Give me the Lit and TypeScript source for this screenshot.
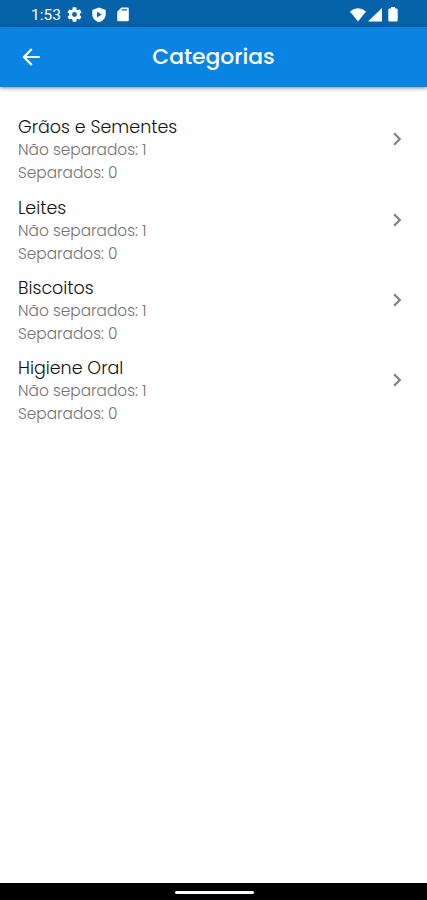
import { LitElement, html, css } from "lit";
import { customElement, property } from "lit/decorators.js";

interface Category {
  name: string;
  pending: number;
  done: number;
}

const categories: Category[] = [
  { name: "Grãos e Sementes", pending: 1, done: 0 },
  { name: "Leites", pending: 1, done: 0 },
  { name: "Biscoitos", pending: 1, done: 0 },
  { name: "Higiene Oral", pending: 1, done: 0 },
];

@customElement("status-bar")
class StatusBar extends LitElement {
  static styles = css`
    :host { display: flex; align-items: center; box-sizing: border-box; height: 27px; padding: 2px 29px 0 31px; background: #0663aa; color: #fff; font: 400 15.5px/20px Roboto, sans-serif; }
    .time { width: 36px; }
    svg { display: block; fill: currentColor; }
    .gear { width: 15px; height: 15px; }
    .shield { width: 18px; height: 18px; margin-left: 8px; }
    .card { width: 17px; height: 17px; margin-left: 6px; }
    .wifi { width: 16px; height: 14px; margin-left: auto; }
    .signal { width: 14px; height: 14px; margin-left: 2px; }
    .battery { width: 10px; height: 15px; margin-left: 6px; }
  `;
  render() {
    return html`
      <span class="time">1:53</span>
      <svg class="gear" viewBox="2 2 20 20"><path d="M19.14 12.94c.04-.3.06-.61.06-.94 0-.32-.02-.64-.07-.94l2.03-1.58a.49.49 0 0 0 .12-.61l-1.92-3.32a.488.488 0 0 0-.59-.22l-2.39.96c-.5-.38-1.03-.7-1.62-.94l-.36-2.54a.484.484 0 0 0-.48-.41h-3.84c-.24 0-.43.17-.47.41l-.36 2.54c-.59.24-1.13.57-1.62.94l-2.39-.96c-.22-.08-.47 0-.59.22L2.74 8.87c-.12.21-.08.47.12.61l2.03 1.58c-.05.3-.09.63-.09.94s.02.64.07.94l-2.03 1.58a.49.49 0 0 0-.12.61l1.92 3.32c.12.22.37.29.59.22l2.39-.96c.5.38 1.03.7 1.62.94l.36 2.54c.05.24.24.41.48.41h3.84c.24 0 .44-.17.47-.41l.36-2.54c.59-.24 1.13-.56 1.62-.94l2.39.96c.22.08.47 0 .59-.22l1.92-3.32c.12-.22.07-.47-.12-.61l-2.01-1.58zM12 15.2A3.2 3.2 0 1 1 12 8.8a3.2 3.2 0 0 1 0 6.4z"/></svg>
      <svg class="shield" viewBox="0 0 18 18"><path fill-rule="evenodd" d="M9 1.500 15.700 4V8.500C15.700 12.200 13 15.100 9 16.200 5 15.100 2.300 12.200 2.300 8.500V4ZM7 5.700V11.500L11.600 8.600Z"/></svg>
      <svg class="card" viewBox="0 0 17 17"><path fill-rule="evenodd" d="M7.500 1.500H13.500Q14.800 1.500 14.800 2.800V14Q14.800 15.300 13.500 15.300H4.500Q3.200 15.300 3.200 14V5.800ZM7.700 3.300V4.600H13V3.300Z"/></svg>
      <svg class="wifi" viewBox="0 0 16 14"><path d="M0 3.500Q8-3 16 3.500L8 13.500Z"/></svg>
      <svg class="signal" viewBox="0 0 14 14"><path d="M14 0V13.500H0Z"/></svg>
      <svg class="battery" viewBox="0 0 10 15"><path d="M3 0H7V1.500H8.500Q9.700 1.500 9.700 2.700V13.300Q9.700 14.500 8.500 14.500H1.500Q.3 14.500 .3 13.300V2.700Q.3 1.500 1.500 1.500H3Z"/></svg>
    `;
  }
}

@customElement("app-header")
class AppHeader extends LitElement {
  static styles = css`
    :host { display: grid; grid-template-columns: 64px 1fr 64px; align-items: center; height: 60px; background: #0984e3; color: #fff; box-shadow: 0 1px 4px rgba(0, 0, 0, 0.5); }
    svg { display: block; width: 26px; height: 26px; margin-left: 18px; fill: currentColor; }
    h1 { margin: 0; text-align: center; font: 500 21.8px/30px Poppins, Inter, sans-serif; white-space: nowrap; }
  `;
  render() {
    return html`
      <svg viewBox="0 0 24 24"><path d="M20 11H7.830l5.590-5.590L12 4l-8 8 8 8 1.410-1.410L7.830 13H20v-2z"/></svg>
      <h1>Categorias</h1>
    `;
  }
}

@customElement("category-row")
class CategoryRow extends LitElement {
  @property({ attribute: false }) category!: Category;
  static styles = css`
    :host { display: flex; justify-content: space-between; height: 80.3px; padding: 0 17px 0 18px; font-family: Poppins, Inter, sans-serif; font-weight: 300; white-space: nowrap; }
    .name { margin-bottom: -0.95px; font-size: 17.5px; line-height: 23px; color: #111; }
    .count { font-size: 15.35px; line-height: 23px; color: #737373; }
    svg { display: block; width: 26px; height: 26px; margin-top: 10.100px; fill: #808080; }
  `;
  render() {
    const c = this.category;
    return html`
      <div>
        <div class="name">${c.name}</div>
        <div class="count">Não separados: ${c.pending}</div>
        <div class="count">Separados: ${c.done}</div>
      </div>
      <svg viewBox="0 0 24 24"><path d="M10 6 8.590 7.410 13.170 12l-4.580 4.590L10 18l6-6z"/></svg>
    `;
  }
}

@customElement("app-root")
class AppRoot extends LitElement {
  static styles = css`
    :host { display: flex; flex-direction: column; height: 900px; overflow: hidden; background: #fff; }
    main { flex: 1; padding-top: 29.3px; }
    .nav { display: flex; justify-content: center; align-items: center; box-sizing: border-box; height: 17px; padding-top: 1px; background: #000; }
    .handle { width: 79px; height: 3px; margin-left: 1px; border-radius: 2px; background: #fff; }
  `;
  render() {
    return html`
      <status-bar></status-bar>
      <app-header></app-header>
      <main>${categories.map((c) => html`<category-row .category=${c}></category-row>`)}</main>
      <div class="nav"><div class="handle"></div></div>
    `;
  }
}
